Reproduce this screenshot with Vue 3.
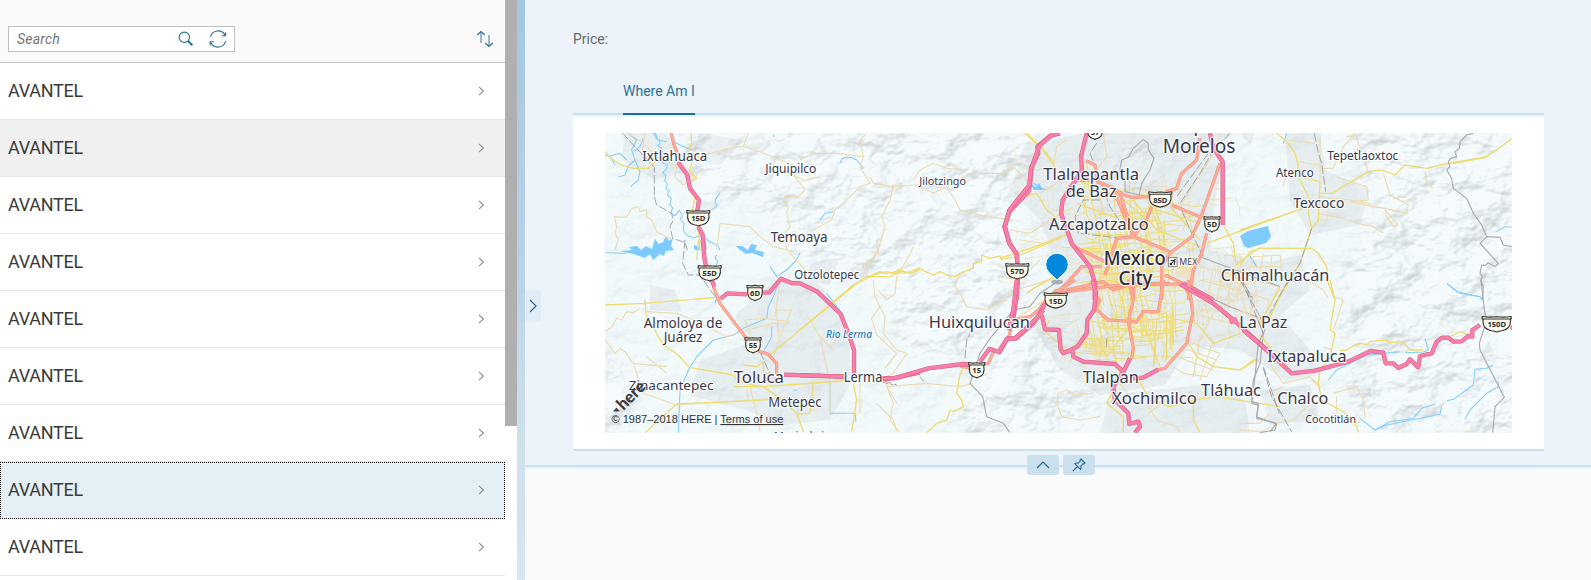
<script setup>
const rows = Array.from({ length: 9 }, (_, i) => ({ id: i, name: 'AVANTEL', hover: i === 1, selected: i === 7 }))

// [text, x, baseline, width, size, extra class]
const labels = [
  ['Ixtlahuaca', 642.3, 161, 65, 14], ['Jiquipilco', 765.3, 172.7, 51, 12], ['Temoaya', 770.7, 241.7, 57, 14],
  ['Otzolotepec', 794.3, 279, 65, 12], ['Almoloya de', 643.7, 328.3, 78.7, 14], ['Juárez', 663.7, 342.3, 38.7, 14],
  ['Zinacantepec', 628.7, 389.7, 84.7, 13], ['Toluca', 733.7, 383, 50.3, 17], ['Metepec', 768.3, 407.3, 53.3, 14],
  ['Lerma', 843.7, 381.7, 38.7, 14], ['Rio Lerma', 826, 338.3, 46, 10.5, 'water-name'], ['Jilotzingo', 919.3, 185, 46.7, 11],
  ['Huixquilucan', 928.7, 328.3, 101.3, 17], ['Ecatepec de', 1144, 131, 110, 19], ['Morelos', 1162.7, 152.5, 72.7, 20],
  ['Tlalnepantla', 1043.3, 180, 95.7, 17], ['de Baz', 1065.7, 196.7, 51, 17], ['Azcapotzalco', 1049, 230.3, 99.7, 17],
  ['Mexico', 1103.7, 264.5, 62, 19.5, 'capital'], ['City', 1118.5, 284.5, 34, 19.5, 'capital'], ['MEX', 1179.3, 265, 18, 9.5],
  ['Chimalhuacán', 1220.7, 281.3, 108.6, 17], ['Tlalpan', 1082.7, 383, 56.3, 17], ['Xochimilco', 1112, 404.3, 85, 17],
  ['Tláhuac', 1201, 395.7, 60, 17], ['La Paz', 1239.3, 328.3, 48, 17], ['Ixtapaluca', 1267.3, 362, 79.3, 17],
  ['Chalco', 1277.3, 404, 51, 17], ['Cocotitlán', 1305.3, 423, 50.7, 11], ['Tepetlaoxtoc', 1327.3, 160, 71, 12],
  ['Atenco', 1276, 177, 37.7, 12], ['Texcoco', 1293.3, 208, 51, 14], ['Mexicaltzingo', 774, 441, 70, 13],
]

// [text, centre x, centre y, half width]
const shields = [
  ['15D', 698.3, 218, 11.5], ['55D', 709.7, 273, 11.5], ['6D', 755, 292.7, 8], ['55', 753, 345, 8],
  ['57D', 1017.3, 271, 11.5], ['15', 976.7, 370, 8], ['85D', 1160.3, 199.3, 11.5], ['5D', 1212, 224, 8],
  ['15D', 1055.7, 300.3, 11.5], ['57', 1095, 131.5, 8], ['150D', 1496.7, 324, 14.5],
]
const shieldPath = (w) =>
  `M${-w} -7.5 Q${-w / 2} -6.3 0 -7.3 Q${w / 2} -6.3 ${w} -7.5 V-5 H${w - 1} Q${w + 0.6} 5 ${w * 0.35} 6.8 Q${w * 0.12} 7.2 0 8 Q${-w * 0.12} 7.2 ${-w * 0.35} 6.8 Q${-w - 0.6} 5 ${-w + 1} -5 H${-w} Z M${-w + 1} -5 H${w - 1}`

// Road data is grouped in sheets; every sheet unit is a third of a pixel.
const sheets = [
  {
    x: 560, y: 60,
    minor: 'M205 220 L250 250 L290 290 L350 320 M360 305 L470 275 L550 258 L640 290 L700 315 M550 258 L566 218 M780 350 L733 362 L700 345 L720 370 L735 390 L715 410 L675 408 L670 425 L685 440 L680 460 L690 500 L675 520 L680 570 M165 570 L175 540 L165 520 L170 500 L163 470 L200 472 L215 445 L235 440 L240 455 L260 450 L260 470 L275 480 L290 515 L340 540 M470 570 L480 490 L570 500 L600 530 L640 560 L700 575 M350 320 L345 350 L370 375 L410 350 M255 218 L245 290 L270 310',
    yellow: 'M135 275 Q170 320 225 325 L265 325 L285 305 L300 290 M393 218 L395 250 L385 275 L398 300 L388 335 L410 355 L385 370 M405 415 L395 460 M415 500 L420 570',
    water: 'M205 220 L230 240 L215 270 L225 300 L205 318 L195 345 L175 352 M225 300 L240 335 L235 360 L212 380 M250 235 L240 260 L222 275 M280 220 L295 240 L320 245 M340 245 L375 262 L395 270 M480 398 L465 420 L470 440 L455 450 M135 285 L150 290 L165 315 M150 288 L180 280 L200 300 M640 225 L643 231',
    river: 'M283 218 l8 12 l-3 6 l10 4 l2 12 l-8 4 l12 8 l5 16 l-6 12 l10 10 l-4 8 l12 6 l-3 14 l-10 6 l9 12 l-3 14 l8 10 l-4 14 l10 8 l-6 10 l12 12 l-4 18 l8 10 l-6 15 l14 8 l12 -16 l10 16 l-8 10 l12 14 l-2 22 l12 14 l20 6 l14 -6 l20 6 l12 12 l24 10 l8 16',
    rail: 'M186 218 L283 322 L283 410 L290 435 L335 460 L340 480 L330 500 L338 535 L375 548 L382 570',
    orange: 'M333 218 L342 255 L353 280 L356 310',
    pink: 'M355 308 L382 345 L390 385 L417 420 L411 458 M415 500 L428 525 L433 570',
  },
  {
    x: 600, y: 240,
    minor: 'M15 275 L35 262 L50 235 L65 240 L80 215 L100 218 L120 205 M140 215 L230 220 L290 245 L380 290 L440 270 L520 250 L570 250 M530 210 L575 210 L550 265 L520 350 M530 210 L535 290 M460 310 L435 240 L490 235 L570 245 M540 120 L525 230 M570 40 L620 95 M830 0 L835 40 L780 90 M835 150 L860 180 L885 160 L890 110 L920 60 L940 20 M840 200 L815 235 L830 285 L890 340 L855 385 M620 225 L660 290 L700 330 M660 290 L690 430 M15 300 L30 320 L45 340 L60 325 L75 335 L100 370 L200 380 M100 370 L130 460 L230 495 L520 475 M690 430 L690 520 M780 425 L780 520 M450 440 L470 520 L480 575 M440 450 L445 475 M200 400 L140 350 M830 490 L880 540 L890 575 M860 440 L890 490',
    yellow: 'M15 195 L135 190 L350 172 M135 178 L138 225 L190 315 L235 345 L268 382 L400 405 M510 345 L760 135 L830 102 L860 95 L880 100 L895 90 L930 100 L958 90 M135 578 L230 492 L400 485 L520 478 M400 440 L490 440 L560 435 L760 420 M400 405 Q410 430 490 440 L540 475 L590 520 L610 575 M640 430 L630 520 L590 522 M430 375 L470 380 L490 365 L490 400 L520 400 M760 430 L770 480 L755 575 M295 0 L290 60',
    water: 'M600 38 L590 60 L560 90 L530 110 L510 80 M540 118 L520 170 L505 200 L500 235 L430 265 L400 285 L340 300 L290 350 L268 385 L240 450 L235 578 M515 260 L515 290 L485 345 M690 430 L690 520 L765 520 L768 545 M350 175 L345 190 M580 452 L592 450 M680 160 L730 225 M15 38 L80 40',
    river: 'M350 45 l-5 8 l8 10 l-4 14 l4 14 l-10 6 l4 12 l-12 6 l-2 12',
    rail: 'M255 0 L248 70 L265 105 L300 105 L345 170 M480 335 L500 380 L510 400 M840 425 L880 435',
    orange: 'M340 140 L352 170 L360 190 L435 290 L445 297 M475 333 L505 343 L530 370 L530 402',
    pink: 'M308 0 L314 60 L318 78 M335 120 L343 140 M362 176 L382 160 L440 163 M490 158 L508 157 L543 116 L575 129 L600 130 L652 155 L722 222 L745 280 L762 330 L762 407 M552 404 L735 410 M840 415 L880 415 L960 397',
  },
  {
    x: 800, y: 120,
    minor: 'M0 120 L40 100 L110 100 L190 110 L180 140 L210 190 L180 200 L130 250 L105 270 L95 300 L40 330 M190 110 L180 60 L200 40 M210 170 L220 190 L280 200 L350 195 L400 220 L440 200 L510 160 L610 160 L640 140 M440 200 L465 240 L480 270 L560 290 L640 300 M280 200 L270 240 L245 290 L255 320 L235 390 L205 430 L200 470 M220 480 L225 530 L255 590 L250 640 L290 690 L320 700 L280 760 L250 775 L280 850 L270 900 L300 938 M260 800 L380 790 L480 800 L520 790 M480 460 L465 500 L480 520 L500 560 L560 570 L620 540 M640 140 L690 190 M340 180 L360 150 L400 130 L440 145 L500 150 M600 470 L660 480 L720 420 M620 520 L680 500 L780 470 M650 595 L720 550 L780 530',
    yellow: 'M0 630 L190 475 L215 465 L240 455 L260 460 L290 455 L310 460 L330 455 L355 445 L400 465 L420 455 L440 465 L465 470 L480 460 L520 445 L520 430 L545 425 L545 405 L570 415 L600 408 L605 418 L640 412 L660 405 L780 355 M680 40 L720 80 L765 140 M680 520 L710 500 L780 460 M670 230 L710 220 L740 270 L770 295 M490 740 L480 765 L470 820 L485 840 L490 860 L460 875 L450 870 L440 900 L410 910 L380 938 M200 470 L270 470 L310 450',
    water: 'M120 130 Q125 108 150 112 L170 120 L190 145 M60 300 L75 280 L100 275 M700 190 L735 210',
    river: '',
    rail: 'M495 715 L500 660 L510 640 M55 760 L60 770 M360 770 L372 785 M250 782 L290 795',
    border: 'M780 480 L720 520 L690 560 L640 570 L600 620 L570 655 L540 700 L510 790 L548 830 L560 890 L610 910 L630 938',
    orange: 'M770 510 L735 545 L715 570 L690 590 L640 600 L625 655 M580 695 L565 730 L545 735 M480 738 L510 745',
    pink: 'M780 40 L750 48 L712 80 L715 100 L695 140 L690 195 L685 215 L628 275 L613 320 L628 370 L650 402 L652 430 M653 478 L648 540 L638 610 L625 630 M0 766 L130 770 M250 777 L290 773 L385 745 L490 732 L515 735 M540 725 L568 686 L598 697 L622 655 L648 655 L700 610 L720 580 L735 550',
  },
  {
    x: 1000, y: 120,
    minor: 'M60 130 L110 150 L160 140 L170 80 L200 60 M120 220 L170 190 L190 160 M30 330 L90 340 L150 300 L220 260 M60 360 L130 370 L200 340 M250 170 L280 200 M310 40 L320 110 L290 150 M540 260 L640 100 L660 40 M560 290 L550 330 M590 430 L580 480 M600 440 L840 500 M640 445 L620 540 M670 450 L650 540 M700 460 L680 540 M730 460 L710 540 M600 480 L750 520 M300 240 L330 330',
    yellow: 'M75 40 L140 100 L160 130 M0 415 L120 375 L200 345 M620 370 L840 290 M670 315 L700 370 L708 435 L775 385 L840 385 M230 180 L330 220 L400 300 M230 250 L340 290 L470 270 L600 310 M400 240 L470 330 L600 380 M450 260 L480 330 M225 390 L300 395 M510 260 L600 360 M260 120 L270 230 L300 340 M190 160 L240 180 M340 210 L440 300',
    water: 'M95 200 L125 208 M750 408 L770 440',
    river: '',
    rail: 'M290 70 L270 100 L300 180 L330 260 L370 320 M690 40 L640 90 L600 160 L540 250 M625 100 L530 230 M545 270 L575 340 L610 410 M725 480 L757 540 M300 240 L250 240 L225 290 L235 340 L370 355',
    border: 'M375 175 L358 158 L365 120 L385 112 L400 85 L430 58 L445 70 L445 90 L462 115 L450 150 L425 190 L418 225 L375 215 Z M600 410 L680 440 L760 470 L840 500',
    orange: 'M258 122 L285 135 L292 185 L340 205 M228 182 L270 180 M340 205 L372 225 L395 232 L450 230 M340 210 L400 350 L450 370 L510 395 M358 215 L402 350 M600 55 L590 120 L545 160 L530 205 L495 215 M660 130 L605 285 L575 350 L510 400 L485 440 L485 540 M515 255 L600 290 M455 260 L440 300 L400 350 L350 355 L330 420 L315 465 M620 340 L605 400 L580 450 L565 540 M228 382 L315 425 M305 440 L245 440 L200 490 L150 540 M180 515 L310 485 L340 510 L400 490 L510 490 M400 490 L400 540 M495 465 L550 490 L575 540',
    pink: 'M160 40 L118 78 L92 150 L88 195 L28 270 L15 320 L28 370 L50 402 L52 430 M53 478 L50 540 M260 40 L243 110 L246 150 L188 240 L183 280 L215 370 L270 440 L285 490 L284 540 M630 40 L640 85 L668 125 L668 315 M550 490 L640 540',
  },
  {
    x: 1000, y: 280,
    minor: 'M550 170 L600 200 L660 220 L620 290 L550 280 L520 260 M600 170 L580 290 M640 180 L600 300 M540 200 L650 240 M530 230 L640 270 M170 370 L175 340 L200 330 L225 345 L280 340 M170 370 L185 410 L240 420 L300 410 M440 370 L470 420 L530 440 L540 458 M445 400 L500 360 M640 100 L590 200 M700 60 L640 100 M590 60 L720 90 M580 100 L690 130 M230 180 L210 250 M240 200 L360 220 M300 290 L350 300 L400 360',
    yellow: 'M490 110 L590 130 L640 190 L720 160 M470 120 L460 260 M500 100 L500 240 M430 130 L480 260 M410 290 L450 360 L510 380 L580 360 L650 350 L840 380 M340 330 L320 370 L370 410 L370 458 M560 180 L590 230 L640 260 L720 270 L770 240 M840 20 L780 130 M580 370 L580 420 L600 458 M200 210 L130 150 L150 120 M290 170 L320 230 L380 150',
    water: '',
    river: '',
    rail: 'M725 0 L790 160 M790 260 L838 400 M320 175 L320 205 M390 90 L390 140',
    border: 'M580 30 L690 80 L770 110 L790 160 L780 250 L760 300 L755 370 L775 375 L770 415 L830 430 L810 455',
    orange: 'M165 38 L225 0 M285 85 L325 120 L410 125 L430 95 L475 95 L490 0 M385 0 L400 60 L385 125 L400 205 L395 235 M565 0 L578 100 L560 190 L495 265 L470 270 M200 35 L360 15 L540 12 M285 90 L300 60 L280 40',
    pink: 'M50 0 L40 90 L28 140 M0 210 L20 178 L45 175 L110 115 L130 90 M125 105 L135 148 L177 150 L182 208 L190 220 L212 210 L232 200 L260 160 L262 120 L282 90 L288 40 L278 0 M215 205 L220 230 L250 245 L345 252 L370 275 L390 235 M370 275 L340 320 L345 360 L385 400 L388 432 L415 425 L420 440 L405 458 M400 295 L430 293 L475 268 M540 12 L640 70 L700 120 L840 245 M690 128 L710 116',
  },
  {
    x: 1240, y: 110,
    minor: 'M130 230 L140 190 M145 90 L225 100 M175 155 L235 165 M240 75 L240 210 M345 70 L310 110 L280 175 M320 80 L350 75 L355 100 M280 175 L240 175 M290 200 L380 230 L385 270 L330 275 L400 290 L435 295 L500 310 L505 285 L450 255 L430 190 M500 260 L460 265 M435 300 L475 345 L460 350 L435 310 M400 295 L385 280 L330 270 L240 260 M235 310 L310 325 L350 340 L400 350 L430 370 M265 310 L260 330 L235 330 M355 100 L375 150 L385 190 M555 185 L560 215 L578 235 M5 560 L40 440 L120 435 L125 480 M70 430 L60 490 M95 435 L90 500 M35 470 L125 470 M200 510 L250 540 L265 565',
    yellow: 'M110 70 L145 100 L165 130 L175 165 L170 190 L210 270 L205 310 L215 355 M0 360 L175 300 L205 290 M195 205 L240 215 L235 330 L215 355 M240 250 L275 250 L385 185 L425 180 L465 195 L495 165 L560 175 L600 165 L740 140 L790 105 L815 85 M0 465 L30 425 L60 415 L215 415 L235 430 L260 470 L265 520 L285 570 M215 355 L180 460 L115 565 M640 160 L740 142',
    water: 'M140 70 L130 100 M30 440 L52 472 M620 520 L650 545 L720 560 L725 570 M770 365 L795 350 L815 352',
    river: '',
    rail: 'M223 70 L235 130 L245 160 L257 245 M215 355 L180 460 L115 565 M0 500 L38 565',
    border: 'M700 70 L680 75 L660 95 L658 115 L645 125 L650 140 L632 145 L625 155 L630 170 L620 180 L635 205 L640 235 L680 265 L700 310 L725 345 L740 380 L720 400 L775 460 L765 470 L745 458 L735 466 L725 465 L720 490 L728 500 L722 510 L730 530 L728 570 M740 380 L780 382 L790 405 L815 410',
    orange: '',
    pink: '',
  },
  {
    x: 1240, y: 280,
    minor: 'M0 90 L60 120 L90 100 L85 60 L30 40 M90 210 L95 260 L130 310 L210 290 L240 320 L215 300 M90 270 L150 250 M280 150 L310 60 L285 50 M275 210 L250 200 M280 340 L350 320 L370 360 L375 410 L350 430 M290 350 L290 400 M0 430 L60 430 L90 400 M0 450 L60 455 L95 440 M210 370 L160 420 L100 430 M240 430 L220 400 M130 320 L80 340',
    yellow: 'M270 0 L285 60 L270 150 L285 160 L270 230 L240 270 L235 310 L245 360 L310 395 L350 440 L355 458 M140 10 L90 110 L110 140 M0 270 L40 240 L55 240 M60 165 L115 230 L130 260 M300 212 L320 210 L345 195 L365 190 L380 195 L390 185 L440 180 L450 188 L490 185 L510 210 L550 210 M615 175 L640 165 L660 155 L690 165',
    water: 'M265 300 L290 270 L340 245 L380 225 L480 215 M495 218 L550 216 L565 210 L555 175 M620 10 L660 40 L720 50 L728 60 M620 362 L640 358 L700 315 L705 268 L740 265 L758 255 M360 415 L405 450 L450 425 L490 420 L520 415 L545 385 L585 372 M405 450 L440 435 L600 403 L605 380 M675 418 L690 390 L740 340 L775 320 L775 305',
    river: '',
    rail: 'M0 0 L60 110 M70 265 L95 350 L155 455 M145 0 L90 100',
    border: 'M723 0 L733 90 L740 120 L718 190 L720 210 L793 352 L765 380 L758 458 M60 110 L75 150 L55 190 L45 290 L35 365 L55 370 L50 410 L110 432 L105 450 L60 458',
    orange: '',
    pink: 'M10 150 L80 210 L155 280 L225 272 L325 245 L392 213 L430 218 L437 250 L460 250 L475 264 L500 252 L510 238 L535 262 L540 228 L575 220 L590 185 L605 174 L625 173 L640 185 L665 184 L685 168 L697 170 L697 150 L720 135 M812 143 L818 143',
  },
]

// Dense street network of the metropolitan area.
let seed = 11
const rnd = () => ((seed = (seed * 16807) % 2147483647) / 2147483647)
const line = (cx, cy, len, angle) => {
  const dx = (Math.cos(angle) * len) / 2
  const dy = (Math.sin(angle) * len) / 2
  const f = (n) => n.toFixed(1)
  return `M${f(cx - dx)} ${f(cy - dy)} L${f(cx + rnd() * 3)} ${f(cy + rnd() * 3)} L${f(cx + dx)} ${f(cy + dy)}`
}
const network = (count, x, y, w, h, min, max) =>
  Array.from({ length: count }, (_, i) => {
    const cx = x + rnd() * w
    const cy = y + rnd() * h
    return line(cx, cy, min + rnd() * (max - min), (i % 2 ? 1.45 : -0.05) + (rnd() - 0.5) * 0.35)
  }).join(' ')
const coreStreets = network(120, 1092, 235, 84, 100, 14, 48)
const northStreets = network(60, 1080, 190, 115, 65, 12, 42)
const southStreets = network(50, 1078, 320, 105, 42, 12, 38)
const sideStreets = network(120, 1060, 180, 180, 190, 8, 26)
const eastStreets = network(52, 1192, 268, 65, 55, 10, 30)
const hillStreets = network(60, 1005, 150, 80, 180, 8, 24)
</script>

<template>
  <div class="page">
    <aside class="master">
      <header class="toolbar">
        <div class="search">
          <span class="placeholder">Search</span>
          <svg class="ico" width="16" height="16" viewBox="0 0 16 16">
            <circle cx="6.3" cy="6.3" r="5.2" /><path d="M10 10 L14.4 14.2" stroke-width="2" />
          </svg>
          <svg class="ico refresh" width="18" height="18" viewBox="0 0 18 18">
            <path d="M1.4 7 A7.8 7.8 0 0 1 16 5.2 M16.6 11 A7.8 7.8 0 0 1 2 12.8 M16.6 2.2 V5.7 H12.8 M1.2 15.4 V11.8 H5" />
          </svg>
        </div>
        <svg class="ico sort" width="18" height="18" viewBox="0 0 18 18">
          <path d="M5 2 V13 M13 5 V16" stroke="#8fb2c6" stroke-width="1.8" />
          <path d="M1.2 5 L5 1.6 L8.8 5 M9.2 13 L13 16.4 L16.8 13" stroke-width="1.3" />
        </svg>
      </header>
      <ul class="list">
        <li v-for="r in rows" :key="r.id" class="row" :class="{ hover: r.hover, selected: r.selected }">
          <span>{{ r.name }}</span>
          <svg width="7" height="10" viewBox="0 0 7 10"><path d="M1 .8 L5.4 5 L1 9.2" /></svg>
        </li>
      </ul>
    </aside>
    <div class="scroll"><div class="thumb"></div></div>
    <div class="splitter"></div>
    <main class="detail">
      <section class="head">
        <button class="expand">
          <svg class="ico" width="8" height="14" viewBox="0 0 8 14"><path d="M1 1 L7 7 L1 13" stroke-width="1.2" /></svg>
        </button>
        <div class="price">Price:</div>
        <nav class="tabs"><span class="tab">Where Am I</span></nav>
        <div class="card">
          <svg class="map" width="907" height="300" viewBox="605 133 907 300">
            <defs>
              <filter id="relief" x="0" y="0" width="100%" height="100%" color-interpolation-filters="sRGB">
                <feTurbulence type="fractalNoise" baseFrequency="0.025 0.035" numOctaves="4" seed="7" />
                <feColorMatrix values="0 0 0 0 0  0 0 0 0 0  0 0 0 0 0  1 0 0 0 0" />
                <feDiffuseLighting surfaceScale="10" diffuseConstant="1.15" lighting-color="#f4fbff">
                  <feDistantLight azimuth="225" elevation="62" />
                </feDiffuseLighting>
              </filter>
              <filter id="soft"><feGaussianBlur stdDeviation="9" /></filter>
              <mask id="hills">
                <g filter="url(#soft)" fill="#fff">
                  <path d="M840 125 H1040 L1015 230 L1020 300 L960 360 L905 350 L880 290 L800 250 L740 180 L770 125 Z" />
                  <path d="M985 360 L1040 330 L1085 385 L1110 440 H950 Z M1345 125 H1525 V440 H1360 L1350 370 L1340 280 L1370 210 Z" />
                  <path d="M595 350 L640 390 L625 440 H595 Z M1110 150 L1150 140 L1150 195 L1120 195 Z M665 130 L740 140 L750 200 L700 200 Z" />
                </g>
              </mask>
            </defs>
            <rect x="605" y="133" width="907" height="300" fill="#f3fafc" />
            <g class="urban">
              <path d="M625 133 L665 133 L690 170 L655 180 L622 160 Z M700 133 L745 140 L720 165 L690 160 Z" />
              <path d="M650 285 L675 290 L682 312 L650 310 Z M735 315 L775 280 L815 280 L840 310 L850 350 L850 385 L830 420 L785 425 L745 410 L690 395 L700 360 L745 345 Z M812 262 L840 258 L830 285 L805 280 Z" />
              <path d="M1025 145 L1085 133 L1230 133 L1215 200 L1210 250 L1270 262 L1300 255 L1310 290 L1280 315 L1310 350 L1320 375 L1285 380 L1240 350 L1190 345 L1165 385 L1100 395 L1060 370 L1030 320 L1060 280 L1040 220 L1010 190 Z" />
              <path d="M1285 133 L1320 133 L1325 170 L1370 190 L1360 225 L1310 235 L1290 200 Z M1240 133 L1255 133 L1250 145 Z M1345 385 L1370 385 L1372 397 L1350 398 Z M1260 390 L1310 385 L1320 420 L1270 425 Z" />
              <path d="M1110 395 L1200 385 L1245 400 L1250 433 L1100 433 Z" />
            </g>
            <rect x="605" y="133" width="907" height="300" filter="url(#relief)" opacity=".06" />
            <g mask="url(#hills)"><rect x="605" y="133" width="907" height="300" filter="url(#relief)" opacity=".17" /></g>
            <g class="lake">
              <path d="M620 251 L632 250 L629 247 L637 246 L641 250 L646 246 L652 249 L655 239 L659 244 L663 242 L666 236 L669 241 L673 238 L671 246 L674 250 L666 251 L664 256 L660 254 L653 260 L650 254 L645 258 L633 254 Z M736 246 L742 246 L748 250 L751 244 L757 245 L755 250 L764 252 L763 257 L752 253 L746 254 L740 250 Z M694 245 L700 247 L699 251 L694 249 Z M1031 184 L1036 187 L1039 183 L1043 190 L1034 190 Z" />
              <path d="M1240 236 L1248 231 L1268 226 L1271 237 L1266 243 L1248 248 L1244 246 Z" />
            </g>
            <g fill="#eee0b8" opacity=".8">
              <path d="M1083 250 L1102 255 L1101 267 L1080 258 Z M1100 270 L1140 278 L1135 296 L1095 290 Z M1091 338 L1106 340 L1105 358 L1090 355 Z M1180 262 L1192 264 L1190 280 L1174 275 Z" />
            </g>
            <g class="street pale"><path :d="sideStreets" /><path :d="eastStreets" /><path :d="hillStreets" opacity=".6" /></g>
            <g class="street bright"><path :d="coreStreets" /><path :d="northStreets" /><path :d="southStreets" /></g>
            <g v-for="(s, i) in sheets" :key="'a' + i" :transform="`translate(${s.x} ${s.y}) scale(.33333)`" class="sheet">
              <path :d="s.water" class="water" /><path v-if="s.river" :d="s.river" class="water" />
              <path :d="s.minor" class="minor" /><path :d="s.yellow" class="yellow" />
              <path v-if="s.border" :d="s.border" class="border" /><path :d="s.rail" class="rail" />
            </g>
            <g v-for="(s, i) in sheets" :key="'b' + i" :transform="`translate(${s.x} ${s.y}) scale(.33333)`" class="sheet">
              <path :d="s.orange" class="orange-edge" /><path :d="s.orange" class="orange" />
              <path :d="s.pink" class="pink-edge" /><path :d="s.pink" class="pink" />
            </g>
            <g v-for="([t, x, y, w], i) in shields" :key="'s' + i" :transform="`translate(${x} ${y})`">
              <path :d="shieldPath(w)" class="shield" />
              <text class="shield-text" y="3.2">{{ t }}</text>
            </g>
            <ellipse cx="1057" cy="282" rx="6" ry="2.5" fill="#9aa5ac" opacity=".8" />
            <text v-for="([t, x, y, w, size, cls], i) in labels" :key="'l' + i" :x="x" :y="y" :textLength="w"
              :font-size="size" lengthAdjust="spacingAndGlyphs" class="place" :class="cls">{{ t }}</text>
            <g class="brand" transform="translate(623.5 411) rotate(-45)">
              <text textLength="33" lengthAdjust="spacingAndGlyphs">here</text>
            </g>
            <path d="M613 411.5 L616.5 407.5 L620 411.5 Z" fill="#444" />
            <g transform="translate(1168 257)">
              <rect x=".5" y=".5" width="8.5" height="9" fill="#fff" stroke="#777" stroke-width=".8" />
              <path d="M2 8 L7.5 2.2 M2.5 3.2 L6.8 4.2 L6.2 8 M2 6 L4 8" stroke="#333" stroke-width="1.1" fill="none" />
            </g>
            <path d="M1057 280 L1049 272.5 A11.3 11.3 0 1 1 1065 272.5 Z" fill="#0389dc" stroke="#fff" stroke-width="1" />
            <text class="legal" x="611.5" y="423" textLength="106" lengthAdjust="spacingAndGlyphs">© 1987–2018 HERE |</text>
            <text class="legal link" x="720.3" y="423" textLength="63" lengthAdjust="spacingAndGlyphs">Terms of use</text>
          </svg>
        </div>
        <div class="actions">
          <button>
            <svg class="ico" width="14" height="8" viewBox="0 0 14 8"><path d="M1 7 L7 1 L13 7" stroke-width="1.2" /></svg>
          </button>
          <button>
            <svg class="ico" width="14" height="14" viewBox="0 0 14 14">
              <path d="M9 1 L13 5 L11.8 5.9 L11.2 5.7 L8.8 8.2 Q9.4 9.8 8.5 11.3 L2.8 5.6 Q4.3 4.7 5.9 5.3 L8.3 2.8 L8.1 2.2 Z M5.6 8.5 L.8 13.2" />
            </svg>
          </button>
        </div>
      </section>
    </main>
  </div>
</template>

<style>
body { overflow: hidden; }
</style>

<style scoped>
.page { display: flex; width: 1591px; height: 580px; overflow: hidden; background: #fff; font-family: Roboto, "Liberation Sans", sans-serif; }
.ico { display: block; fill: none; stroke: #2a6c92; stroke-width: 1.1; }
.master { width: 505px; flex: none; overflow: hidden; }
.toolbar { box-sizing: border-box; height: 63px; display: flex; justify-content: space-between; align-items: flex-start; padding: 26px 11px 0 8px; background: #fafafa; border-bottom: 1px solid #c8c8c8; }
.search { box-sizing: border-box; width: 227px; height: 26px; display: flex; align-items: center; padding: 0 7px 0 8px; background: #fff; border: 1px solid #bfbfbf; }
.placeholder { flex: 1; font-size: 14px; font-style: italic; color: #757575; letter-spacing: .2px; }
.refresh { margin-left: 15px; }
.sort { margin-top: 4px; }
.list { list-style: none; margin: 0; padding: 0; }
.row { box-sizing: border-box; height: 57px; display: flex; align-items: center; justify-content: space-between; padding: 0 20px 0 8px; border-bottom: 1px solid #e5e5e5; font-size: 18px; line-height: 24px; color: #3a3a3a; letter-spacing: -.25px; }
.row svg { fill: none; stroke: #8c8c8c; stroke-width: 1.1; }
.row.hover { background: #f0f0f0; }
.row.selected { background: #e5f0f6; border-bottom-color: #e5f0f6; outline: 1px dotted #000; outline-offset: -1px; }
.scroll { width: 12px; flex: none; background: #fff; }
.thumb { height: 426px; background: #b0b0b0; }
.splitter { width: 8px; flex: none; background: linear-gradient(#a4c7e0, #b9d3e8 48%, #c9deea 68%, #d9e6ef); }
.detail { flex: 1; min-width: 0; background: #fafafa; }
.head { position: relative; box-sizing: border-box; height: 467px; padding: 0 47px 0 48px; background: #ecf3fa; border-bottom: 2px solid #cbe0ed; box-shadow: 0 2px 0 #ecf3fa; }
.price { height: 51px; padding-top: 28px; font-size: 14px; line-height: 22px; color: #6a6a6a; box-sizing: border-box; }
.tabs { height: 64px; box-sizing: border-box; border-bottom: 2px solid #cbe0ed; padding-left: 50px; display: flex; }
.tab { box-sizing: border-box; width: 72px; height: 64px; padding-top: 29px; font-size: 14px; line-height: 22px; color: #2a7298; border-bottom: 2px solid #1b6e96; white-space: nowrap; }
.card { box-sizing: border-box; height: 334px; margin-top: 2px; padding: 16px 0 0 32px; background: #fff; border-bottom: 2px solid #cbe0ed; }
.map { display: block; }
.expand { position: absolute; left: 0; top: 290px; width: 16px; height: 32px; border: 0; border-radius: 0 3px 3px 0; padding: 0 0 0 4px; background: #e1edf6; }
.actions { position: absolute; left: 502px; top: 455px; display: flex; gap: 4px; }
.actions button { width: 32px; height: 20px; border: 0; border-radius: 3px; padding: 0; display: flex; align-items: center; justify-content: center; background: #cbe0ee; }
.urban { fill: #e4ebee; opacity: .85; }
.lake { fill: #7ecbff; }
.street { fill: none; }
.street path { fill: none; }
.pale { stroke: #ecd9a5; stroke-width: .8; opacity: .8; }
.bright { stroke: #efdb62; stroke-width: .9; opacity: .9; }
.sheet path { fill: none; stroke-linejoin: round; }
.sheet .minor { stroke: #ecdcb2; stroke-width: 3.4; }
.sheet .yellow { stroke: #efdc70; stroke-width: 4; }
.sheet .water { stroke: #86cdfb; stroke-width: 3.2; }
.sheet .border { stroke: #aaa9ae; stroke-width: 3.4; }
.sheet .rail { stroke: #98979a; stroke-width: 2.6; stroke-dasharray: 26 7; }
.sheet .orange-edge { stroke: #ee8f7f; stroke-width: 9.5; }
.sheet .orange { stroke: #ffab96; stroke-width: 6.5; }
.sheet .pink-edge { stroke: #d8618b; stroke-width: 13; }
.sheet .pink { stroke: #f87fa8; stroke-width: 9.5; }
.shield { fill: #fbf9ea; stroke: #34332f; stroke-width: 1.1; stroke-linejoin: round; }
.shield-text { font: bold 7.6px "Noto Sans", sans-serif; fill: #2c2b2b; text-anchor: middle; }
.place { font-family: "Noto Sans", sans-serif; fill: #383848; stroke: #fff; stroke-width: 2.4px; stroke-opacity: .85; paint-order: stroke; stroke-linejoin: round; }
.place.capital { font-weight: 500; fill: #2c2c3a; }
.place.water-name { fill: #1877bd; font-style: italic; font-weight: 500; }
.brand text { font: 900 17px Lato, sans-serif; fill: #3c3c3c; }
.legal { font: 11px "Liberation Sans", sans-serif; fill: #333; }
.link { text-decoration: underline; }
</style>
